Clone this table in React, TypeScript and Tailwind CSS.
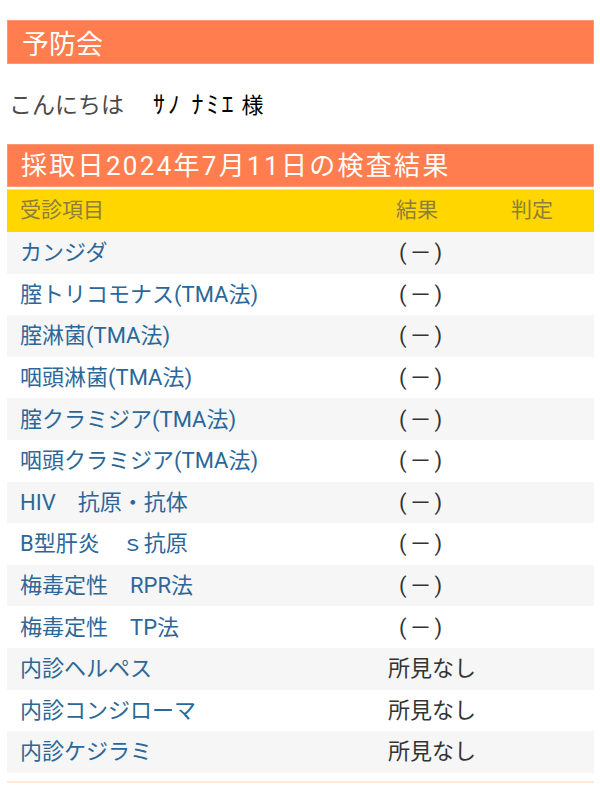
const rows = [
  { name: "カンジダ", result: "(－)" },
  { name: "腟トリコモナス(TMA法)", result: "(－)" },
  { name: "腟淋菌(TMA法)", result: "(－)" },
  { name: "咽頭淋菌(TMA法)", result: "(－)" },
  { name: "腟クラミジア(TMA法)", result: "(－)" },
  { name: "咽頭クラミジア(TMA法)", result: "(－)" },
  { name: "HIV　抗原・抗体", result: "(－)" },
  { name: "B型肝炎　ｓ抗原", result: "(－)" },
  { name: "梅毒定性　RPR法", result: "(－)" },
  { name: "梅毒定性　TP法", result: "(－)" },
  { name: "内診ヘルペス", result: "所見なし" },
  { name: "内診コンジローマ", result: "所見なし" },
  { name: "内診ケジラミ", result: "所見なし" },
];

const font = "font-['Roboto','Noto_Sans_CJK_JP',sans-serif]";

export default function App() {
  return (
    <div className={`w-[600px] h-[800px] bg-white pt-[20px] pl-[7px] pr-[6px] ${font}`}>
      {/* title */}
      <div className="h-[44px] bg-[#ff7d4e] border border-[#f59a74] flex items-center pl-[14px]">
        <span className="text-white text-[27px] leading-none font-['Noto_Sans_CJK_JP',sans-serif]">予防会</span>
      </div>

      {/* greeting */}
      <div className="h-[80px] flex items-center pl-[2px] pb-[2px] font-['Noto_Sans_CJK_JP',sans-serif]">
        <span className="text-[#4a4a4a] text-[23px]">こんにちは</span>
        <span className="text-black text-[24px] ml-[29px] tracking-[3px]">ｻﾉ ﾅﾐｴ</span>
        <span className="text-black text-[22px] ml-[5px]">様</span>
      </div>

      {/* results */}
      <div className="h-[43px] bg-[#ff7d4e] border border-[#f59a74] flex items-center pl-[13px]">
        <span className="text-white text-[26px] leading-none tracking-[2.3px]">
          採取日2024年7月11日の検査結果
        </span>
      </div>
      <div className="h-[43px] mt-[2px] bg-[#ffd600] border-t border-[#ffe97a] flex items-center text-[#8c7d3c] text-[21px]">
        <div className="w-[353px] pl-[13px]">受診項目</div>
        <div className="w-[116px] text-center pr-[2px]">結果</div>
        <div className="flex-1 text-center pr-[6px]">判定</div>
      </div>
      {rows.map((row, i) => (
        <div
          key={i}
          className={`h-[41.6px] flex items-center text-[22px] ${i % 2 === 0 ? "bg-[#f6f6f6]" : "bg-white"}`}
        >
          <div className="w-[353px] pl-[13px] text-[#2c6799] whitespace-nowrap">{row.name}</div>
          {row.result === "所見なし" ? (
            <div className="w-[144px] text-center text-[#333]">{row.result}</div>
          ) : (
            <div className="w-[124px] text-center text-[#333] tracking-[3px]">{row.result}</div>
          )}
          <div className="flex-1" />
        </div>
      ))}
      <div className="mt-[8px] h-[2px] bg-[#fdeadb]" />
    </div>
  );
}
